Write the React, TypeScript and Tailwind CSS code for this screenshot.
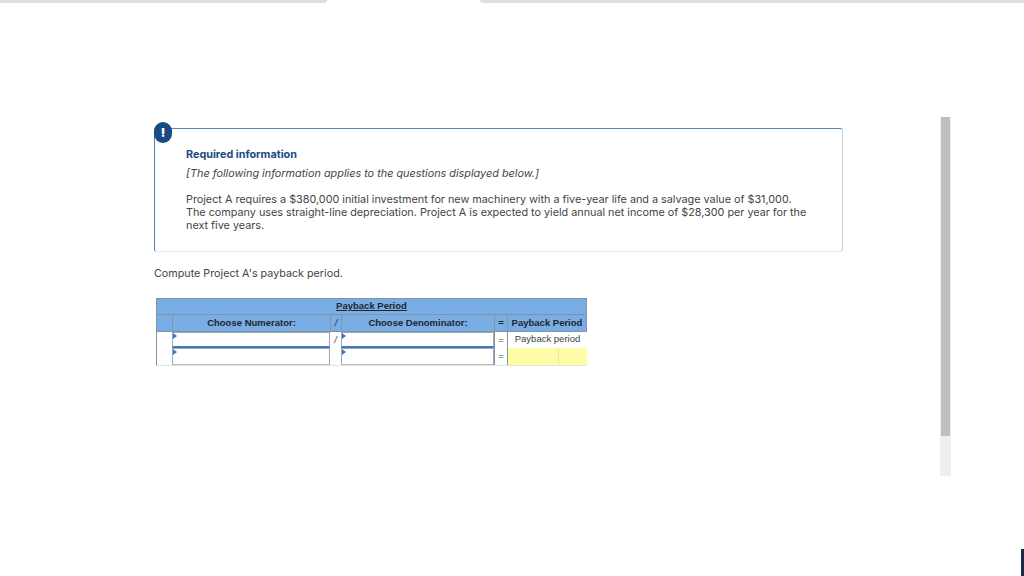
import React from 'react';

const font = "font-['Inter','Lato',sans-serif]";
const cellFont = "font-['Liberation_Sans',Arial,sans-serif]";

// little blue corner marker on the entry cells
const EntryCell: React.FC<{ last?: boolean; width: string }> = ({ last, width }) => (
    <div className={`relative ${width} h-full bg-white border-x border-t border-[#9aa7b8] ${last ? 'border-b border-b-[#b9b9b9]' : 'border-b-2 border-b-[#3f78bd]'}`}>
        <span className="absolute left-0 top-0 w-0 h-0 border-y-[3px] border-y-transparent border-l-[4px] border-l-[#3f78bd]"></span>
    </div>
);

const HeaderCell: React.FC<{ children: React.ReactNode; width: string }> = ({ children, width }) => (
    <div className={`${width} h-full flex items-center justify-center border-l border-[#85929f] text-[9.5px] font-bold text-[#22262b] whitespace-nowrap`}>
        {children}
    </div>
);

const PaybackTable: React.FC = () => (
    <div className={`ml-[2px] mt-[17px] w-[431px] ${cellFont}`}>
        <div className="h-[17px] flex items-center justify-center bg-[#78ade6] border border-[#85929f] text-[9.5px] font-bold text-[#22262b] underline">
            Payback Period
        </div>
        <div className="h-[17px] flex bg-[#78ade6] border-x border-b border-[#85929f]">
            <div className="w-[15px]"></div>
            <HeaderCell width="w-[158px]">Choose Numerator:</HeaderCell>
            <HeaderCell width="w-[11px]"><span className="italic font-normal">/</span></HeaderCell>
            <HeaderCell width="w-[153px]">Choose Denominator:</HeaderCell>
            <HeaderCell width="w-[13px]">=</HeaderCell>
            <HeaderCell width="w-[79px]">Payback Period</HeaderCell>
        </div>
        <div className="h-[16px] flex border-l border-[#85929f] text-[9.5px] text-[#3a3f45]">
            <div className="w-[15px]"></div>
            <EntryCell width="w-[158px]" />
            <div className="w-[11px] flex items-center justify-center italic">/</div>
            <EntryCell width="w-[153px]" />
            <div className="w-[13px] flex items-center justify-center border-l border-[#85929f]">=</div>
            <div className="w-[80px] pb-[2px] flex items-center justify-center border-l border-[#85929f] whitespace-nowrap">Payback period</div>
        </div>
        <div className="h-[18px] flex border-l border-[#85929f] border-b border-b-[#e3e3e3] text-[9.5px] text-[#3a3f45]">
            <div className="w-[15px]"></div>
            <EntryCell last width="w-[158px]" />
            <div className="w-[11px]"></div>
            <EntryCell last width="w-[153px]" />
            <div className="w-[13px] flex items-center justify-center border-l border-[#85929f]">=</div>
            <div className="w-[51px] bg-[#fdfda8] border-l border-[#85929f]"></div>
            <div className="w-[29px] bg-[#fdfda8] border-l border-[#e8e8a0]"></div>
        </div>
    </div>
);

export default function App() {
    return (
        <div className={`relative w-[1024px] h-[576px] overflow-hidden bg-white ${font}`}>
            {/* Top strip with the active tab gap */}
            <div className="flex h-[3px]">
                <div className="w-[327px] bg-[#dce0e6] rounded-br-[3px]"></div>
                <div className="w-[153px]"></div>
                <div className="flex-1 bg-[#dce0e6] rounded-bl-[3px]"></div>
            </div>

            <div className="flex">
                <div className="ml-[154px] mt-[125px] w-[689px]">
                    {/* Required information box */}
                    <div className="relative h-[124px] rounded-[3px] border border-[#c3d0e2] border-t-[#5f87b3] border-l-[#4f7bab] border-b-[#e4eaf2] pl-[31px] pt-[19px] text-[#3f4449]">
                        <span className="absolute left-[-1px] top-[-7px] w-[18px] h-[21px] rounded-full bg-[#184a86] flex items-center justify-center text-white text-[12px] font-black leading-none">!</span>
                        <p className="text-[10.8px] leading-[13px] font-bold text-[#1c4a80]">Required information</p>
                        <p className="mt-[6px] text-[10.85px] leading-[13px] italic">[The following information applies to the questions displayed below.]</p>
                        <p className="mt-[13px] w-[624px] text-[10.8px] leading-[13px]">
                            Project A requires a $380,000 initial investment for new machinery with a five-year life and a salvage value of $31,000. The company uses straight-line depreciation. Project A is expected to yield annual net income of $28,300 per year for the next five years.
                        </p>
                    </div>

                    <p className="mt-[15px] text-[10.75px] leading-[14px] text-[#3f4449]">Compute Project A's payback period.</p>

                    <PaybackTable />
                </div>

                {/* Scroll track */}
                <div className="ml-[97px] mt-[114px] w-[11px] h-[359px] bg-[#efefef] px-[1px]">
                    <div className="h-[319px] bg-[#bfbfbf]"></div>
                </div>
            </div>

            {/* Dark sliver in the bottom right corner */}
            <div className="absolute right-0 bottom-0 w-[3px] h-[27px] bg-[#1a2b4a]"></div>
        </div>
    );
}
